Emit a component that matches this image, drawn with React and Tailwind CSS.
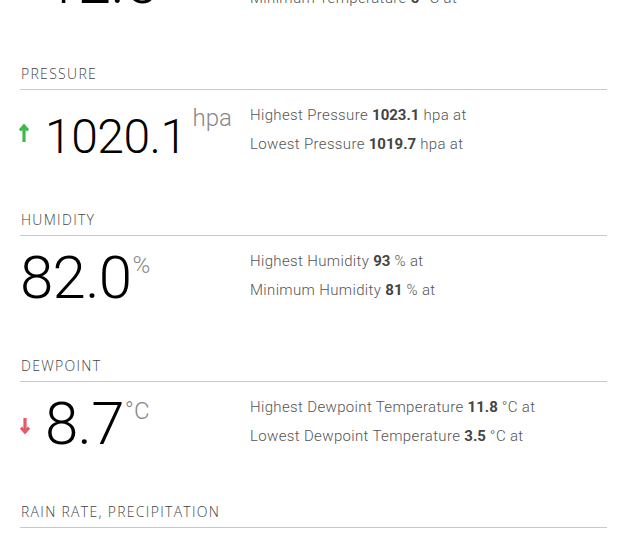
import React from 'react'

const sections = [
  {
    title: 'Temperature',
    value: '12.5',
    unit: '°C',
    trend: 'down',
    size: 'top',
    lines: [
      { label: 'Highest Temperature', value: '13.9', unit: '°C at' },
      { label: 'Minimum Temperature', value: '5', unit: '°C at' },
    ],
  },
  {
    title: 'Pressure',
    value: '1020.1',
    unit: 'hpa',
    trend: 'up',
    size: 'small',
    lines: [
      { label: 'Highest Pressure', value: '1023.1', unit: 'hpa at' },
      { label: 'Lowest Pressure', value: '1019.7', unit: 'hpa at' },
    ],
  },
  {
    title: 'Humidity',
    value: '82.0',
    unit: '%',
    size: 'big',
    lines: [
      { label: 'Highest Humidity', value: '93', unit: '% at' },
      { label: 'Minimum Humidity', value: '81', unit: '% at' },
    ],
  },
  {
    title: 'Dewpoint',
    value: '8.7',
    unit: '°C',
    trend: 'down',
    size: 'big',
    lines: [
      { label: 'Highest Dewpoint Temperature', value: '11.8', unit: '°C at' },
      { label: 'Lowest Dewpoint Temperature', value: '3.5', unit: '°C at' },
    ],
  },
  {
    title: 'Rain Rate, Precipitation',
    lines: [],
  },
]

const valueClass = {
  top: 'text-[60px] leading-none font-light tracking-[-0.5px] text-black mt-[9px]',
  big: 'text-[60px] leading-none font-light tracking-[-0.7px] text-black mt-[12px]',
  small: 'text-[48px] leading-none font-light tracking-[-0.5px] text-black mt-[23px]',
}

const TrendArrow = ({ dir }) => {
  const up = dir === 'up'
  return (
    <svg width="10" height="20" viewBox="0 0 10 20" className={up ? 'mt-[33px] -ml-px' : 'mt-[35px]'}>
      {up ? (
        <g fill="none" stroke="#3cba4b" strokeWidth="3.2">
          <path d="M5 19V3" />
          <path d="M1 7.5l4-4.5 4 4.5" />
        </g>
      ) : (
        <g fill="none" stroke="#e65b68" strokeWidth="3.2">
          <path d="M5 1v14" />
          <path d="M1 10.5l4 4.5 4-4.5" />
        </g>
      )}
    </svg>
  )
}

const Section = ({ s }) => {
  return (
    <section className="h-[146px]">
      <h2 className="font-['Open_Sans',sans-serif] font-light text-[14px] leading-5 pb-[5px] pl-px uppercase text-[#444] tracking-[1.3px] border-b border-[#c8c8c8]">
        {s.title}
      </h2>
      {s.value && (
        <div className="flex font-['Roboto',sans-serif]">
          <div className="w-[230px] flex items-start">
            {s.trend && (
              <div className="w-[25px] flex">
                <TrendArrow dir={s.trend} />
              </div>
            )}
            <span className={valueClass[s.size]}>{s.value}</span>
            <span
              className={
                s.unit === 'hpa'
                  ? 'ml-[6px] text-[24px] leading-none font-light text-[#888] mt-[16px]'
                  : 'ml-[1px] text-[24px] leading-none font-light text-[#888] mt-[17px]'
              }
            >
              {s.unit}
            </span>
          </div>
          <div className="pt-[11px] text-[15px] leading-[29px] font-light tracking-[0.35px] text-[#555]">
            {s.lines.map((l) => (
              <div key={l.label}>
                {l.label} <b className="font-bold tracking-normal text-[#444]">{l.value}</b> {l.unit}
              </div>
            ))}
          </div>
        </div>
      )}
    </section>
  )
}

export default function App() {
  return (
    <div className="w-[628px] h-[536px] overflow-hidden bg-white">
      <div className="-mt-[82px] pl-5 pr-[21px]">
        {sections.map((s) => (
          <Section key={s.title} s={s} />
        ))}
      </div>
    </div>
  )
}
